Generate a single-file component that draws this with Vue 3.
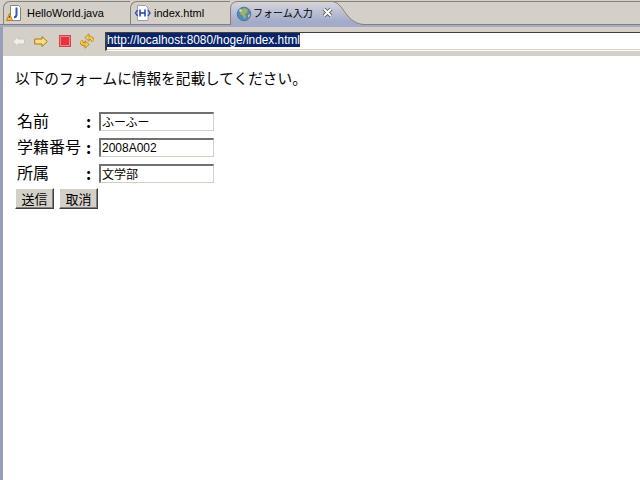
<template>
  <div class="win">
    <div class="tabbar">
      <div class="tab t1">
        <svg class="ico" width="18" height="18" viewBox="0 0 18 18">
          <path d="M4.500 1.500h8l2 2v13h-10z" fill="#fff" stroke="#8a8570"/>
          <path d="M10.500 3.500v7q0 2.500-2.500 3" fill="none" stroke="#2f5fb0" stroke-width="2"/>
          <path d="M3.500 9.500l3 7h-6z" fill="#f3c04a" stroke="#b87a1c"/>
          <path d="M3.500 12v2" stroke="#7a4a10"/>
        </svg>
        <span>HelloWorld.java</span>
      </div>
      <div class="tab t2">
        <svg class="ico" width="18" height="18" viewBox="0 0 18 18">
          <path d="M3.500 1.500h8l2.500 2.500v12.500h-10.500z" fill="#fff" stroke="#9aa0b0"/>
          <path d="M3.500 6L1.500 9l2 3M14 6l2 3-2 3" fill="none" stroke="#1c3fd0" stroke-width="1.300"/>
          <path d="M6 5.500v7M11 5.500v7M6 9h5" fill="none" stroke="#1c3fb0" stroke-width="1.500"/>
        </svg>
        <span>index.html</span>
      </div>
      <div class="tab t3">
        <svg class="tabshape" width="134" height="27" viewBox="0 0 134 27">
          <defs>
            <linearGradient id="tabfill" x1="0" y1="0" x2="0" y2="1">
              <stop offset="0" stop-color="#d6d6dc"/>
              <stop offset=".8" stop-color="#a3abc9"/>
              <stop offset="1" stop-color="#a3abc9"/>
            </linearGradient>
          </defs>
          <path d="M.5 27V9Q.5 1.500 8 1.500H102C110 2 113 11 118 16C122 21 127 24 134 24.500V27Z" fill="url(#tabfill)"/>
          <path d="M.5 25V9Q.5 1.500 8 1.500H102C110 2 113 11 118 16C122 21 127 24 134 24.500" fill="none" stroke="#86827a"/>
          <path d="M102 1.500H134" fill="none" stroke="#86827a"/>
        </svg>
        <svg class="ico globe" width="16" height="16" viewBox="0 0 16 16">
          <circle cx="8" cy="8" r="6.800" fill="#4a8cc4" stroke="#5a7490"/>
          <path d="M6 3l3-1 3 2-1 3-2 1 1 3-2 2-1-3-3-2 1-3z" fill="#a6b25a"/>
          <path d="M12 9l2-1v2l-2 2z" fill="#c8c46a"/>
          <circle cx="4.500" cy="4.500" r="1.300" fill="#cfe4f2"/>
        </svg>
        <span class="jp">フォーム入力</span>
        <svg class="close" width="11" height="11" viewBox="0 0 11 11">
          <path d="M2 2l7 7M9 2l-7 7" stroke="#555" stroke-width="3.800"/>
          <path d="M2 2l7 7M9 2l-7 7" stroke="#fff" stroke-width="2"/>
        </svg>
      </div>
      <div class="filler"></div>
    </div>
    <div class="stripe"></div>
    <div class="body">
      <div class="toolbar">
        <div class="tools">
          <svg width="13" height="11" viewBox="0 0 13 11"><path d="M6 .5L.7 5.500 6 10.500V8h6.500V3H6z" fill="#efeee9" stroke="#c9c6bd"/></svg>
          <svg width="14" height="11" viewBox="0 0 14 11"><path d="M8 .5l5.300 5L8 10.500V8H.7V3H8z" fill="#f8dc80" stroke="#a87a10"/></svg>
          <svg width="14" height="12" viewBox="0 0 14 12"><rect x="2.500" y=".5" width="11" height="11" fill="#e8323c" stroke="#d8404c"/><rect x="3.500" y="1.500" width="9" height="9" fill="none" stroke="#f08088"/></svg>
          <svg width="14" height="16" viewBox="0 0 14 16">
            <path d="M13 8.500Q12.500 4.500 8.500 4.500" fill="none" stroke="#b98616" stroke-width="3.600"/>
            <path d="M9 .8L4.800 4.500 9 8.200z" fill="#f5cc58" stroke="#b98616" stroke-width=".9"/>
            <path d="M13 8.500Q12.500 4.500 8.500 4.500" fill="none" stroke="#f5cc58" stroke-width="2"/>
            <path d="M1 7.500Q1.500 11.500 5.500 11.500" fill="none" stroke="#b98616" stroke-width="3.600"/>
            <path d="M5 7.800l4.200 3.700L5 15.200z" fill="#f5cc58" stroke="#b98616" stroke-width=".9"/>
            <path d="M1 7.500Q1.500 11.500 5.500 11.500" fill="none" stroke="#f5cc58" stroke-width="2"/>
          </svg>
        </div>
        <div class="address"><span class="sel">http://localhost:8080/hoge/index.html</span></div>
      </div>
      <div class="page">
        <p class="intro">以下のフォームに情報を記載してください。</p>
        <form class="form" @submit.prevent>
          <div v-for="f in fields" :key="f.label" class="row">
            <span class="label">{{ f.label }}</span>
            <span class="colon">:</span>
            <input class="input" :value="f.value" />
          </div>
          <div class="buttons">
            <button class="btn" type="button">送信</button>
            <button class="btn" type="button">取消</button>
          </div>
        </form>
      </div>
    </div>
  </div>
</template>

<script setup>
const fields = [
  { label: '名前', value: 'ふーふー' },
  { label: '学籍番号', value: '2008A002' },
  { label: '所属', value: '文学部' },
]
</script>

<style>
html, body { margin: 0; background: #fff; overflow: hidden; }
</style>

<style scoped>
.win { width: 640px; height: 480px; overflow: hidden; display: flex; flex-direction: column; font-family: "Noto Sans CJK JP", "Liberation Sans", sans-serif; color: #000; background: #fff; }
.tabbar { height: 24px; flex: none; box-sizing: content-box; background: #d4d0c8; border-bottom: 1px solid #86827a; display: flex; padding-left: 3px; font-family: "Liberation Sans", "Noto Sans CJK JP", sans-serif; font-size: 11px; }
.tab { display: flex; align-items: center; height: 23px; margin-top: 1px; position: relative; box-sizing: border-box; }
.t1, .t2 { border-top: 1px solid #86827a; border-left: 1px solid #86827a; border-top-left-radius: 7px; }
.t1 { width: 127px; padding-left: 2px; gap: 3px; }
.t2 { width: 100px; padding-left: 3px; gap: 2px; }
.t3 { width: 133px; padding-left: 6px; gap: 1px; }
.filler { flex: 1; height: 23px; margin-top: 1px; border-top: 1px solid #86827a; box-sizing: border-box; }
.tabshape { position: absolute; left: 0; top: -1px; }
.ico, .jp, .close { position: relative; }
.globe { margin-top: 2px; }
.jp { font-size: 10px; font-family: "Noto Sans CJK JP", sans-serif; }
.close { margin-left: 8px; }
.stripe { height: 2px; flex: none; background: #a3abc9; }
.body { flex: 1; display: flex; flex-direction: column; border-left: 3px solid #969eba; }
.toolbar { height: 29px; flex: none; box-sizing: border-box; background: #d4d0c8; display: flex; align-items: flex-start; padding: 5px 0 0 9px; }
.tools { display: flex; align-items: center; gap: 9px; height: 18px; width: 93px; flex: none; }
.address { flex: 1; height: 19px; box-sizing: border-box; background: #fff; border-top: 1px solid #404040; border-left: 2px solid #404040; border-bottom: 1px solid #fff; box-shadow: inset 0 -1px 0 #d4d0c8; font-family: "Liberation Sans", sans-serif; font-size: 11.85px; line-height: 14px; white-space: nowrap; overflow: hidden; }
.sel { background: #0a246a; color: #fff; display: inline-block; }
.page { flex: 1; padding: 12px 0 0 12px; }
.intro { margin: 0 0 20px; font-size: 14.67px; line-height: 20px; }
.form { display: flex; flex-direction: column; }
.row { display: flex; align-items: center; height: 26px; font-size: 16px; }
.label { width: 69px; margin-left: 2px; padding-bottom: 2px; white-space: nowrap; }
.colon { width: 13px; font-weight: 700; }
.input { width: 115px; height: 19px; box-sizing: border-box; border-style: solid; border-width: 2px 1px 1px 2px; border-color: #707070 #d4d0c8 #d4d0c8 #707070; padding: 0 0 0 1px; font-family: "Liberation Sans", "Noto Sans CJK JP", sans-serif; font-size: 12px; outline: none; background: #fff; color: #000; }
.buttons { display: flex; gap: 5px; margin-top: 2px; }
.btn { width: 39px; height: 21px; box-sizing: border-box; background: #d4d0c8; border: 1px solid; border-color: #fff #404040 #404040 #fff; box-shadow: inset -1px -1px 0 #808080; padding: 0; font-family: "Noto Sans CJK JP", sans-serif; font-size: 13px; line-height: 16px; color: #000; }
</style>
